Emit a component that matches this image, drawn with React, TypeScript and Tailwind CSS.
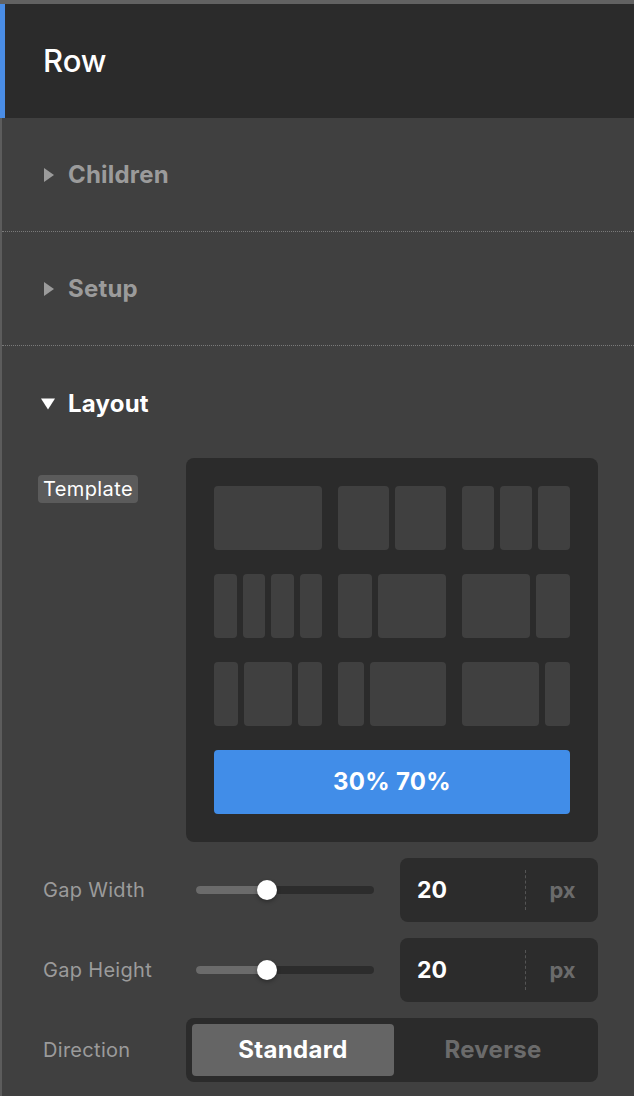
const cell = 'h-16 rounded-[4px] bg-[#404040]'

function Cell({ w }: { w: string }) {
  return <div className={`${cell} ${w}`} />
}

function Section({ title, open }: { title: string; open?: boolean }) {
  return (
    <div className="flex h-[114px] items-center gap-[13px] border-b border-dotted border-[#7a7a7a] pl-[42px]">
      {open ? (
        <svg width="14" height="12" viewBox="0 0 14 12" className="ml-[-2px]">
          <path d="M0 1h14L7 12z" fill="#ffffff" />
        </svg>
      ) : (
        <svg width="11" height="14" viewBox="0 0 11 14">
          <path d="M0 0v14l10-7z" fill="#9b9b9b" />
        </svg>
      )}
      <span className={`text-[24px] font-bold tracking-[0.2px] ${open ? 'text-white' : 'text-[#9b9b9b]'}`}>{title}</span>
    </div>
  )
}

function Slider({ value }: { value: number }) {
  return (
    <div className="relative h-2 w-[178px] rounded-full bg-[#2c2c2c]">
      <div className="h-2 rounded-l-full bg-[#6b6b6b]" style={{ width: `${value}%` }} />
      <div
        className="absolute top-1/2 h-5 w-5 -translate-x-1/2 -translate-y-1/2 rounded-full bg-white shadow-[0_2px_4px_rgba(0,0,0,0.3)]"
        style={{ left: `${value}%` }}
      />
    </div>
  )
}

function GapRow({ label }: { label: string }) {
  return (
    <div className="flex h-16 items-center">
      <span className="w-[153px] text-[20px] tracking-[0.3px] text-[#9b9b9b]">{label}</span>
      <Slider value={40} />
      <div className="ml-[26px] flex h-16 w-[198px] items-center rounded-lg bg-[#2c2c2c]">
        <span className="w-[125px] pl-[17px] text-[23px] font-bold text-white">20</span>
        <div className="h-10 border-l border-dashed border-[#555555]" />
        <span className="flex-1 pl-[1px] text-center text-[22px] font-bold text-[#6b6b6b]">px</span>
      </div>
    </div>
  )
}

export default function App() {
  return (
    <div className="min-h-[1096px] bg-[#626262] pt-1 font-['Inter',sans-serif]">
      <div className="min-h-[1092px] border-l-2 border-[#5c5c5c] bg-[#404040]">
        <div className="ml-[-2px] flex h-[114px] items-center border-l-[5px] border-[#4a8de6] bg-[#2b2b2b] pl-[38px]">
          <h1 className="text-[31px] font-medium text-white">Row</h1>
        </div>

        <Section title="Children" />
        <Section title="Setup" />

        <div className="flex h-[112px] items-center gap-[13px] pl-[39px] pt-[3px]">
          <svg width="14" height="12" viewBox="0 0 14 12">
            <path d="M0 0.5h14L7 11.5z" fill="#ffffff" />
          </svg>
          <span className="text-[24px] font-bold tracking-[0.2px] text-white">Layout</span>
        </div>

        <div className="flex flex-col gap-4 pl-[36px] pr-[36px]">
          <div className="flex">
            <div className="w-[148px] pt-[16px]">
              <span className="rounded-[4px] bg-[#5b5b5b] px-[5px] py-[2px] text-[20px] tracking-[0.4px] text-white">Template</span>
            </div>
            <div className="flex w-[412px] flex-col gap-6 rounded-lg bg-[#2b2b2b] p-7">
              <div className="flex gap-4">
                <div className="flex w-[108px] gap-[6px]"><Cell w="flex-1" /></div>
                <div className="flex w-[108px] gap-[6px]"><Cell w="flex-1" /><Cell w="flex-1" /></div>
                <div className="flex w-[108px] gap-[6px]"><Cell w="flex-1" /><Cell w="flex-1" /><Cell w="flex-1" /></div>
              </div>
              <div className="flex gap-4">
                <div className="flex w-[108px] gap-[6px]"><Cell w="flex-1" /><Cell w="flex-1" /><Cell w="flex-1" /><Cell w="flex-1" /></div>
                <div className="flex w-[108px] gap-[6px]"><Cell w="w-[34px]" /><Cell w="flex-1" /></div>
                <div className="flex w-[108px] gap-[6px]"><Cell w="flex-1" /><Cell w="w-[34px]" /></div>
              </div>
              <div className="flex gap-4">
                <div className="flex w-[108px] gap-[6px]"><Cell w="w-6" /><Cell w="flex-1" /><Cell w="w-6" /></div>
                <div className="flex w-[108px] gap-[6px]"><Cell w="w-[26px]" /><Cell w="flex-1" /></div>
                <div className="flex w-[108px] gap-[6px]"><Cell w="flex-1" /><Cell w="w-[25px]" /></div>
              </div>
              <button className="flex h-16 items-center justify-center rounded-[4px] bg-[#418de8] text-[24px] font-bold tracking-[0.3px] text-white">
                30% 70%
              </button>
            </div>
          </div>

          <div className="ml-[5px] flex flex-col gap-4">
            <GapRow label="Gap Width" />
            <GapRow label="Gap Height" />
            <div className="flex h-16 items-center">
              <span className="w-[143px] text-[20px] tracking-[0.3px] text-[#9b9b9b]">Direction</span>
              <div className="flex h-16 w-[412px] rounded-lg bg-[#2b2b2b] p-[6px]">
                <div className="flex w-[202px] items-center justify-center rounded-[4px] bg-[#656565] text-[24px] font-bold tracking-[0.3px] text-white">
                  Standard
                </div>
                <div className="flex flex-1 items-center justify-center text-[24px] font-bold tracking-[0.3px] text-[#6b6b6b]">
                  Reverse
                </div>
              </div>
            </div>
          </div>
        </div>
      </div>
    </div>
  )
}
